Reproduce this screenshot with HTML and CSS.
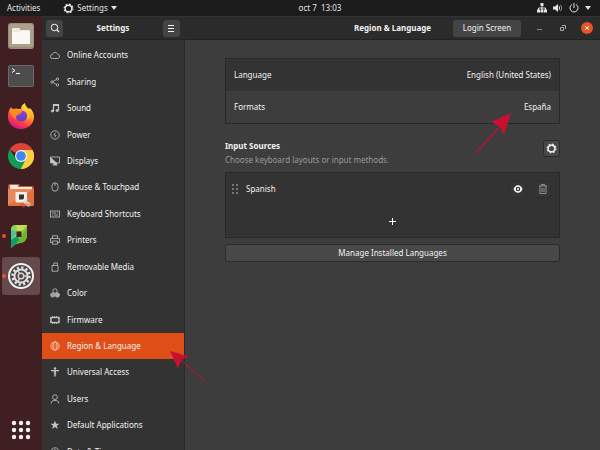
FILE: index.html
```html
<!DOCTYPE html>
<html lang="en">
<head>
<meta charset="utf-8">
<title>Settings</title>
<link rel="stylesheet" href="styles.css">
</head>
<body>
<svg class="defs" width="0" height="0" aria-hidden="true">
  <symbol id="gear" viewBox="0 0 12 12"><circle cx="6" cy="6" r="3.600" fill="none" stroke="currentColor" stroke-width="1.500"/><circle cx="6" cy="6" r="4.800" fill="none" stroke="currentColor" stroke-width="1.200" stroke-dasharray="2 1.770"/></symbol>
</svg>
<header class="topbar">
  <div class="top-left"><a href="#">Activities</a><button class="app-menu" type="button"><svg width="11" height="11"><use href="#gear"/></svg>Settings<svg width="6" height="4" viewBox="0 0 6 4"><path d="M0 0h6L3 4z" fill="currentColor"/></svg></button></div>
  <time class="clock">oct 7&nbsp; 13:03</time>
  <div class="status">
    <svg width="10" height="10" viewBox="0 0 10 10"><path d="M3.500 0h3v3h-3zM0 6.500h3v3H0zM3.500 6.500h3v3h-3zM7 6.500h3v3H7z" fill="currentColor"/><path d="M5 3v4M1.500 7V5h7v2" fill="none" stroke="currentColor"/></svg>
    <svg width="10" height="10" viewBox="0 0 10 10"><path d="M0 3.500h2L5 1v8L2 6.500H0z" fill="currentColor"/><path d="M6 3.200q1.300 1.800 0 3.600" fill="none" stroke="currentColor"/><path d="M7.500 1.800q2.500 3.200 0 6.400" fill="none" stroke="currentColor" opacity=".55"/></svg>
    <svg width="10" height="10" viewBox="0 0 10 10"><path d="M3 1.500a4 4 0 1 0 4 0M5 0v5" fill="none" stroke="currentColor"/></svg>
    <svg width="6" height="4" viewBox="0 0 6 4"><path d="M0 0h6L3 4z" fill="currentColor"/></svg>
  </div>
</header>
<div class="desktop">
  <nav class="dock" aria-label="Dock">
    <a class="launcher" href="#" aria-label="Files"><svg viewBox="0 0 26 26"><rect width="26" height="26" rx="3" fill="#9b8d7a"/><rect x="1" y="1" width="24" height="23" rx="2" fill="#aaa08c"/><path d="M4 6q0-1 1-1h6q1 0 1 1v1h9q1 0 1 1v13H4z" fill="#eee9e2"/><path d="M4 9h8l1-1h9v12q0 1-1 1H5q-1 0-1-1z" fill="#faf8f5"/></svg></a>
    <a class="launcher" href="#" aria-label="Terminal"><svg viewBox="0 0 26 26"><rect y="2" width="26" height="22" rx="2" fill="#6a6a6a"/><rect x="1" y="3" width="24" height="20" rx="1" fill="#4d4d4d"/><path d="M4 5.500l3 2-3 2M8 10.500h4" fill="none" stroke="#fff"/></svg></a>
    <a class="launcher" href="#" aria-label="Firefox"><svg viewBox="0 0 26 26"><defs><linearGradient id="fox" x1=".8" y1="0" x2=".3" y2="1"><stop offset="0" stop-color="#fff044"/><stop offset=".4" stop-color="#ffa51e"/><stop offset=".72" stop-color="#ff3b47"/><stop offset="1" stop-color="#d5118a"/></linearGradient><linearGradient id="globe" x1="0" y1="0" x2="0" y2="1"><stop offset="0" stop-color="#a43de0"/><stop offset="1" stop-color="#5344b8"/></linearGradient></defs><path d="M13 26C5 26 0 20 0 14Q0 8 3 4q1 2 2 2 4-1 5 0l3 0Q13 2 17 0q0 3 4 6l1-1q4 4 4 9c0 7-6 12-13 12z" fill="url(#fox)"/><circle cx="13.500" cy="13" r="5.600" fill="url(#globe)"/><path d="M2 7q5-2 8 0l4 1q-1 3-5 4-2 2-1 4-2 0-4-3-2-3-2-6z" fill="#ff8a25"/><path d="M15 7q7 2 4 10 4-4 1-9l-3-5q-2 1-2 4z" fill="#ffd033"/></svg></a>
    <a class="launcher" href="#" aria-label="Chrome"><svg viewBox="0 0 26 26"><path d="M13 13L1.740 6.500A13 13 0 0 1 24.260 6.500z" fill="#db4437"/><path d="M13 13V7h11.500A13 13 0 0 1 13 26l-2-1z" fill="#ffcd40"/><path d="M13 13l5 3-5 10A13 13 0 0 1 1.740 6.500l6 9z" fill="#0f9d58"/><path d="M13 26l5.200-10L19 10l-1-3h6.500A13 13 0 0 1 13 26z" fill="#ffcd40"/><circle cx="13" cy="13" r="6" fill="#f1f1f1"/><circle cx="13" cy="13" r="4.800" fill="#4285f4"/></svg></a>
    <a class="launcher" href="#" aria-label="Screenshot folder"><svg viewBox="0 0 26 26"><path d="M0 3q0-2 2-2h9l1 2h12q2 0 2 2v17H0z" fill="#c75c30"/><path d="M2 2h8v2h14v3H2z" fill="#f5e9df"/><path d="M0 6h26v16q0 1-1 1H1q-1 0-1-1z" fill="#e2703b"/><path d="M0 6h26L0 22z" fill="#eda07b" opacity=".5"/><rect x="7.500" y="9" width="11.500" height="10.500" rx="1" fill="#f2efec"/><rect x="11" y="11.500" width="5" height="5" fill="#343434"/><path d="M15 16l6 5M19 16l-3 6" stroke="#ddd" stroke-width="1.500"/><circle cx="20.500" cy="21.500" r="1.700" fill="none" stroke="#ddd"/><circle cx="15.500" cy="22.500" r="1.500" fill="none" stroke="#c9352b"/></svg></a>
    <a class="launcher running" href="#" aria-label="Image editor"><svg viewBox="0 0 26 26"><path d="M3 7q0-5 5-5h11v10q0 7-7 8l-4 1-5 4z" fill="#8ac63f"/><path d="M3 7q0-5 5-5l2 6-1 6-6 11z" fill="#8fd05a"/><path d="M3 7l6 2-6 9z" fill="#49c2a4"/><path d="M3 17l6-4 3 4-9 8z" fill="#129c6c"/><path d="M8 2h11l-5 6H9z" fill="#c6dd52"/><path d="M14 13l5-9v8q0 7-7 8l-4 1z" fill="#69b52d"/><rect x="8.500" y="8.500" width="5" height="5.500" fill="#421f23"/></svg></a>
    <a class="launcher running active" href="#" aria-label="Settings"><svg viewBox="0 0 26 26"><circle cx="13" cy="13" r="13" fill="#f2f0ef"/><circle cx="13" cy="13" r="11" fill="#4b4748"/><circle cx="13" cy="13" r="8.500" fill="none" stroke="#e3e0df" stroke-width="2.500" stroke-dasharray="2.200 2.250"/><circle cx="13" cy="13" r="6.600" fill="none" stroke="#e3e0df" stroke-width="2"/><circle cx="13" cy="13" r="2.800" fill="none" stroke="#d8d4d3" stroke-width="1.400"/><path d="M15.500 13H19M11.800 10.800L10 7.700M11.800 15.200L10 18.300" stroke="#d8d4d3" stroke-width="1.400"/></svg></a>
    <a class="launcher all-apps" href="#" aria-label="Show applications"><svg viewBox="0 0 26 26" fill="#f5f2f1"><circle cx="6" cy="6" r="2.200"/><circle cx="13" cy="6" r="2.200"/><circle cx="20" cy="6" r="2.200"/><circle cx="6" cy="13" r="2.200"/><circle cx="13" cy="13" r="2.200"/><circle cx="20" cy="13" r="2.200"/><circle cx="6" cy="20" r="2.200"/><circle cx="13" cy="20" r="2.200"/><circle cx="20" cy="20" r="2.200"/></svg></a>
  </nav>
  <aside class="sidebar">
    <div class="headerbar side-head">
      <button class="btn square" type="button" aria-label="Search"><svg width="10" height="10" viewBox="0 0 10 10" fill="none" stroke="currentColor"><circle cx="4.500" cy="4.500" r="3.300"/><path d="M7 7l2 2" stroke-width="1.300"/></svg></button>
      <h1>Settings</h1>
      <button class="btn square" type="button" aria-label="Menu"><svg width="6" height="7" viewBox="0 0 6 7"><path d="M0 .5h6M0 3.500h6M0 6.500h6" stroke="currentColor"/></svg></button>
    </div>
    <ul class="panels">
      <li><a href="#"><svg viewBox="0 0 10 10"><path d="M2.500 8.500a2 2 0 0 1-.2-4 2.800 2.800 0 0 1 5.300-.5 2.300 2.300 0 0 1 .2 4.500z"/></svg>Online Accounts</a></li>
      <li><a href="#"><svg viewBox="0 0 10 10"><circle cx="2" cy="5" r="1.200"/><circle cx="7.500" cy="2" r="1.200"/><circle cx="7.500" cy="8" r="1.200"/><path d="M3 4.500l3.500-2M3 5.500l3.500 2"/></svg>Sharing</a></li>
      <li><a href="#"><svg viewBox="0 0 10 10"><path d="M3.500 8V1.500h5V7M3.500 2.500h5" stroke-width="1.200"/><ellipse cx="2.500" cy="8" rx="1.300" ry="1" fill="currentColor"/><ellipse cx="7.300" cy="7.500" rx="1.300" ry="1" fill="currentColor"/></svg>Sound</a></li>
      <li><a href="#"><svg viewBox="0 0 10 10"><circle cx="5" cy="5" r="4.200"/><path d="M5.500 2L3.500 5.200h3L4.500 8z" fill="currentColor" stroke="none"/></svg>Power</a></li>
      <li><a href="#"><svg viewBox="0 0 10 10"><path d="M.5 1h9v6h-9z"/><path d="M.5 1L7 7H.500zM4 7h3v2H3z" fill="currentColor" stroke="none"/><path d="M2.500 9h5"/></svg>Displays</a></li>
      <li><a href="#"><svg viewBox="0 0 10 10"><rect x="2" y=".8" width="6" height="8.400" rx="3"/><path d="M5 1v3"/></svg>Mouse &amp; Touchpad</a></li>
      <li><a href="#"><svg viewBox="0 0 10 10"><rect x=".5" y="2" width="9" height="6"/><path d="M2 4h4M7 4h1M2 6h1M4 6h4"/></svg>Keyboard Shortcuts</a></li>
      <li><a href="#"><svg viewBox="0 0 10 10"><path d="M2 7.500H.5v-4h9v4H8M2.500 3V.8h5V3M2.500 6h5v3.200h-5z"/></svg>Printers</a></li>
      <li><a href="#"><svg viewBox="0 0 10 10"><path d="M2 3.500h6v5.700H2zM3.500 3L4 1h3.500v2"/></svg>Removable Media</a></li>
      <li><a href="#"><svg viewBox="0 0 10 10"><circle cx="5" cy="3" r="2.200"/><circle cx="2.700" cy="7" r="2.200" fill="currentColor" opacity=".75"/><circle cx="7.300" cy="7" r="2.200" fill="currentColor" opacity=".85"/></svg>Color</a></li>
      <li><a href="#"><svg viewBox="0 0 10 10"><rect x="1" y="2.500" width="8" height="5" stroke-width="1.400"/><path d="M2.500 1v1M4.500 1v1M6.500 1v1M2.500 8v1M4.500 8v1M6.500 8v1M0 3.500h1M0 6.500h1M9 3.500h1M9 6.500h1"/></svg>Firmware</a></li>
      <li class="selected"><a href="#" aria-current="page"><svg viewBox="0 0 10 10"><circle cx="5" cy="5" r="4.200"/><ellipse cx="5" cy="5" rx="2" ry="4.200"/><path d="M1 5h8M1.500 3h7M1.500 7h7" stroke-width=".5"/></svg>Region &amp; Language</a>
        <svg class="pointer pointer-panel" width="38" height="33" viewBox="0 0 38 33" aria-hidden="true"><path d="M1 1l19 5.500-7.500 3L9 18.500z" fill="#c8102e"/><path d="M11 9l26 23" stroke="#c8102e"/></svg></li>
      <li><a href="#"><svg viewBox="0 0 10 10"><circle cx="5" cy="1.500" r="1.200" fill="currentColor" stroke="none"/><path d="M1 3.700h8M5 3.500v3" stroke-width="1.200"/><path d="M4.400 4v5.500M5.600 4v5.500" stroke-width=".8"/></svg>Universal Access</a></li>
      <li><a href="#"><svg viewBox="0 0 10 10"><circle cx="5" cy="3.200" r="2.400"/><path d="M1.200 9.500q0-3 2.500-3h2.600q2.500 0 2.500 3"/></svg>Users</a></li>
      <li><a href="#"><svg viewBox="0 0 10 10"><path d="M5 .8l1.200 3h3.200L6.900 5.700l.9 3.200L5 7.100 2.200 8.900l.9-3.200L.6 3.800h3.200z" fill="currentColor" stroke="none"/></svg>Default Applications</a></li>
      <li><a href="#"><svg viewBox="0 0 10 10"><circle cx="5" cy="5" r="4.200"/><path d="M5 2v3h2"/></svg>Date &amp; Time</a></li>
    </ul>
  </aside>
  <main class="content">
    <div class="headerbar main-head">
      <h2>Region &amp; Language</h2>
      <div class="head-actions">
        <button class="btn login" type="button">Login Screen</button>
        <button class="win" type="button" aria-label="Minimize"><svg width="5" height="6" viewBox="0 0 5 6"><path d="M0 4.500h5" stroke="#8a8a8a"/></svg></button>
        <button class="win" type="button" aria-label="Restore"><svg width="6" height="6" viewBox="0 0 6 6" fill="none" stroke="#aaa"><path d="M.5 2.500h3v3h-3zM2 .5h3.500V4"/></svg></button>
        <button class="win close" type="button" aria-label="Close"><svg width="6" height="6" viewBox="0 0 6 6"><path d="M1 1l4 4M5 1L1 5" stroke="#fff"/></svg></button>
      </div>
    </div>
    <div class="page">
      <div class="list">
        <button class="row" type="button"><span>Language</span><span>English (United States)</span></button>
        <div class="row-wrap"><button class="row hover" type="button"><span>Formats</span><span>España</span></button>
          <svg class="pointer pointer-formats" width="38" height="42" viewBox="0 0 38 42" aria-hidden="true"><path d="M37 1L17 10l9 4.500L30 23z" fill="#c8102e"/><path d="M28 12L2 41" stroke="#c8102e" stroke-width="1.300"/></svg></div>
      </div>
      <div class="section-head">
        <div><h3>Input Sources</h3><p>Choose keyboard layouts or input methods.</p></div>
        <button class="btn square outlined" type="button" aria-label="Input source options"><svg width="11" height="11"><use href="#gear"/></svg></button>
      </div>
      <div class="list">
        <div class="row source">
          <svg width="6" height="10" viewBox="0 0 6 10" fill="#777"><path d="M0 0h2v2H0zM4 0h2v2H4zM0 4h2v2H0zM4 4h2v2H4zM0 8h2v2H0zM4 8h2v2H4z"/></svg>
          <span class="source-name">Spanish</span>
          <button class="btn square flat" type="button" aria-label="View layout"><svg width="10" height="8" viewBox="0 0 10 8"><path d="M.5 4q1.500-3.800 4.500-3.800T9.500 4Q8 7.800 5 7.800T.5 4z" fill="#fff"/><circle cx="5" cy="4" r="2.300" fill="#333"/><circle cx="5" cy="4" r="1.100" fill="#fff"/></svg></button>
          <button class="btn square flat" type="button" aria-label="Remove"><svg width="8" height="10" viewBox="0 0 8 10" fill="none" stroke="#929292"><path d="M0 2h8M2.500 2V.5h3V2M1 2v7.500h6V2M3 4v4M5 4v4"/></svg></button>
        </div>
        <button class="row add" type="button" aria-label="Add input source"><svg width="7" height="7" viewBox="0 0 7 7"><path d="M0 3.500h7M3.500 0v7" stroke="#fff"/></svg></button>
      </div>
      <button class="btn outlined manage" type="button">Manage Installed Languages</button>
    </div>
  </main>
</div>
</body>
</html>
```
FILE: styles.css
```css
* { box-sizing: border-box; }
body {
  margin: 0;
  height: 100vh;
  overflow: hidden;
  display: flex;
  flex-direction: column;
  background: #3d3d3d;
  color: #f2f2f2;
  font: 8px/12px "Noto Sans", "Open Sans", sans-serif;
}
button { font: inherit; color: inherit; border: 0; padding: 0; background: none; }
a { color: inherit; text-decoration: none; }
h1, h2, h3, p, ul { margin: 0; padding: 0; }
h1, h2, h3 { font-size: 8px; font-weight: 700; }
svg { display: block; flex: none; }
.defs { position: absolute; }

.topbar {
  flex: none;
  height: 16px;
  display: grid;
  grid-template-columns: 1fr auto 1fr;
  align-items: center;
  padding: 0 9px 0 7px;
  background: #1c1c1c;
  color: #e4e4e4;
}
.top-left, .app-menu, .status { display: flex; align-items: center; }
.top-left { gap: 23px; }
.app-menu { gap: 3px; }
/* The clock is centred over the area beside the dock. */
.clock { padding-left: 42px; }
.status { justify-content: flex-end; gap: 6px; }

.desktop { flex: 1; min-height: 0; display: flex; }
.dock {
  flex: none;
  width: 42px;
  display: flex;
  flex-direction: column;
  align-items: center;
  gap: 2px;
  padding: 1px 2px;
  background: #401f23;
}
.launcher {
  position: relative;
  width: 38px;
  height: 38px;
  display: grid;
  place-items: center;
  border-radius: 3px;
}
.launcher svg { width: 26px; height: 26px; }
.launcher.active { background: #66494c; }
.launcher.running::before {
  content: "";
  position: absolute;
  left: 0;
  top: 17px;
  width: 4px;
  height: 4px;
  border-radius: 50%;
  background: #e95420;
}
.all-apps { margin-top: auto; }

.headerbar {
  flex: none;
  height: 24px;
  display: flex;
  align-items: center;
  background: #2b2b2b;
  border-top: 1px solid #333;
  border-bottom: 1px solid #222;
}
.sidebar {
  flex: none;
  width: 143px;
  display: flex;
  flex-direction: column;
  background: #333;
  border-right: 1px solid #2a2a2a;
}
.side-head { justify-content: space-between; padding: 0 4px; }
.panels { flex: none; min-height: 425px; display: flex; flex-direction: column; list-style: none; padding-top: 2px; }
.panels li { flex: 1; display: flex; position: relative; }
.panels a { flex: 1; display: flex; align-items: center; gap: 7px; padding-left: 8px; }
.panels a svg { width: 10px; height: 10px; fill: none; stroke: currentColor; stroke-width: 0.8; color: #c4c4c4; }
.panels .selected { background: #e04e17; z-index: 1; }
.panels .selected a svg { color: #f7c6b0; }

.btn { display: grid; place-items: center; height: 17px; border-radius: 3px; background: #444; }
.square { width: 17px; }
.outlined { border: 1px solid #2a2a2a; background: #484848; }
.flat { border: 1px solid #2e2e2e; background: #353535; }

.content { flex: 1; min-width: 0; }
.main-head { display: grid; grid-template-columns: 1fr auto 1fr; padding: 0 7px; }
.main-head h2 { grid-column: 2; }
.head-actions { display: flex; align-items: center; justify-content: flex-end; gap: 12px; }
.login { width: 68px; }
.win { width: 12px; height: 12px; display: grid; place-items: center; border-radius: 50%; }
.close { background: #e95420; }

.page { margin: 18px 40px 0; }
.list { border: 1px solid #282828; background: #333; }
.row {
  width: 100%;
  height: 32px;
  display: flex;
  align-items: center;
  justify-content: space-between;
  padding: 0 8px;
}
.row-wrap { position: relative; }
.row + .row { border-top: 1px solid #303030; }
.hover { background: #3d3d3d; }
.section-head { display: flex; align-items: flex-start; justify-content: space-between; margin: 16px 0 4px; }
.section-head p { color: #9a9a9a; line-height: 16px; }
.source { gap: 8px; padding-left: 6px; }
.source-name { flex: 1; }
.add { justify-content: center; }
.manage { width: 100%; height: 18px; margin-top: 6px; }

.pointer { position: absolute; pointer-events: none; }
.pointer-panel { left: 127px; top: 17px; }
.pointer-formats { right: 47px; top: 21px; }
```
